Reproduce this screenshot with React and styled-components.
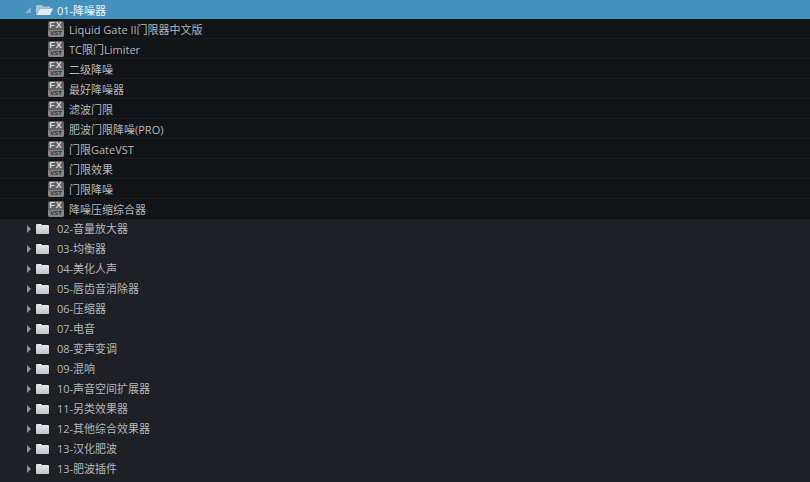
import React from "react";
import styled, { createGlobalStyle } from "styled-components";

const GlobalStyle = createGlobalStyle`
  html, body {
    margin: 0;
    height: 100%;
    background: #1e2025;
    overflow: hidden;
  }
`;

const Tree = styled.div`
  width: 810px;
  height: 482px;
  overflow: hidden;
  font-family: "Open Sans", "Noto Sans CJK SC", sans-serif;
  font-size: 11px;
  color: #b4b6b8;
`;

const OpenRow = styled.div`
  display: flex;
  align-items: center;
  height: 19px;
  padding-left: 25px;
  background: #4491bd;
  color: #f2f5f7;
`;

const Children = styled.div`
  background: #111316;
`;

const ChildRow = styled.div`
  display: flex;
  align-items: center;
  height: 19px;
  padding-left: 48px;
  border-bottom: 1px solid #1a1c20;

  &:last-child {
    border-bottom-color: transparent;
  }
`;

const FolderRow = styled.div`
  display: flex;
  align-items: center;
  height: 20px;
  padding-left: 27px;
`;

const Label = styled.span`
  margin-left: ${(p) => p.$gap}px;
  margin-bottom: ${(p) => p.$lift || 0}px;
  white-space: nowrap;
`;

const Badge = styled.div`
  display: flex;
  flex-direction: column;
  align-items: center;
  width: 16px;
  height: 16px;
  border-radius: 2px;
  overflow: hidden;
  background: #626467;
  color: #dcdcdc;
  font-family: "Liberation Sans", sans-serif;
  font-weight: 700;
`;

const BadgeTop = styled.span`
  font-size: 9px;
  line-height: 9px;
  height: 9px;
  letter-spacing: 1px;
`;

const BadgeBottom = styled.span`
  width: 100%;
  height: 7px;
  background: #838588;
  color: #2e3033;
  font-size: 6px;
  line-height: 7px;
  text-align: center;
`;

const OpenArrow = () => (
  <svg width="6" height="6" viewBox="0 0 6 6">
    <path d="M6 0V6H0Z" fill="#86b2cc" />
  </svg>
);

const ClosedArrow = () => (
  <svg width="4" height="8" viewBox="0 0 4 8">
    <path d="M0 0L4 4L0 8Z" fill="#8e9092" />
  </svg>
);

const OpenFolder = () => (
  <svg width="17" height="10" viewBox="0 0 17 10" style={{ marginLeft: 5 }}>
    <path d="M1 0H6L7 1.5H14V3H4L0 10V1Z" fill="#a9c4d6" />
    <path d="M4 3.5H17L14 10H0.5Z" fill="#e4e9ec" />
  </svg>
);

const Folder = () => (
  <svg width="13" height="10" viewBox="0 0 13 10" style={{ marginLeft: 5 }}>
    <defs>
      <linearGradient id="folderFill" x1="0" y1="0" x2="0" y2="1">
        <stop offset="0" stopColor="#e6e7e8" />
        <stop offset="1" stopColor="#c2c4c6" />
      </linearGradient>
    </defs>
    <path d="M0 1Q0 0 1 0H5L6 1H12Q13 1 13 2V9Q13 10 12 10H1Q0 10 0 9Z" fill="url(#folderFill)" />
  </svg>
);

const plugins = [
  "Liquid Gate II门限器中文版",
  "TC限门Limiter",
  "二级降噪",
  "最好降噪器",
  "滤波门限",
  "肥波门限降噪(PRO)",
  "门限GateVST",
  "门限效果",
  "门限降噪",
  "降噪压缩综合器",
];

const folders = [
  "02-音量放大器",
  "03-均衡器",
  "04-美化人声",
  "05-唇齿音消除器",
  "06-压缩器",
  "07-电音",
  "08-变声变调",
  "09-混响",
  "10-声音空间扩展器",
  "11-另类效果器",
  "12-其他综合效果器",
  "13-汉化肥波",
  "13-肥波插件",
];

export default function App() {
  return (
    <Tree>
      <GlobalStyle />
      <OpenRow>
        <OpenArrow />
        <OpenFolder />
        <Label $gap={4}>01-降噪器</Label>
      </OpenRow>
      <Children>
        {plugins.map((name) => (
          <ChildRow key={name}>
            <Badge>
              <BadgeTop>FX</BadgeTop>
              <BadgeBottom>VST</BadgeBottom>
            </Badge>
            <Label $gap={5}>{name}</Label>
          </ChildRow>
        ))}
      </Children>
      {folders.map((name) => (
        <FolderRow key={name}>
          <ClosedArrow />
          <Folder />
          <Label $gap={8} $lift={2}>{name}</Label>
        </FolderRow>
      ))}
    </Tree>
  );
}
